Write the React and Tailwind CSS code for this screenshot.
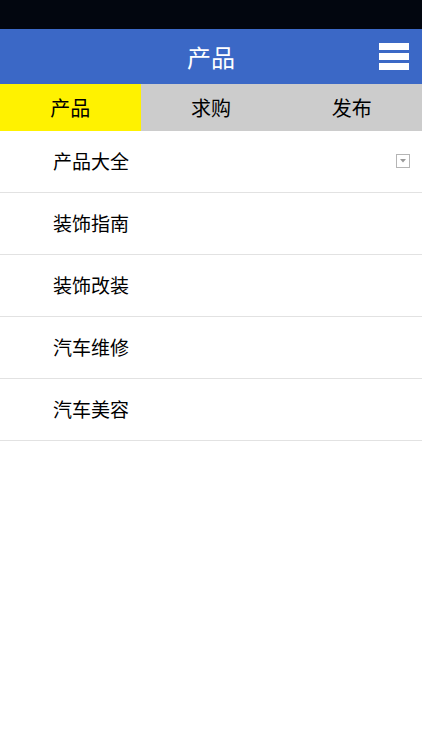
const items = ["产品大全", "装饰指南", "装饰改装", "汽车维修", "汽车美容"];

const font = { fontFamily: '"Noto Sans CJK SC", "Noto Sans", sans-serif' };

export default function App() {
  return (
    <div className="flex h-[750px] w-[422px] flex-col bg-white" style={font}>
      <div className="h-[29px] bg-[#02060f]" />
      <header className="relative flex h-[55px] items-center justify-center bg-[#3b68c6]">
        <h1 className="text-[24px] leading-none text-white">产品</h1>
        <div className="absolute right-[13px] top-[14px] flex w-[30px] flex-col gap-[3px]">
          <span className="h-[7px] bg-white" />
          <span className="h-[7px] bg-white" />
          <span className="h-[7px] bg-white" />
        </div>
      </header>
      <nav className="grid h-[47px] grid-cols-3 bg-[#cccccc] text-[20px] text-black">
        <div className="flex items-center justify-center bg-[#fff200]">产品</div>
        <div className="flex items-center justify-center">求购</div>
        <div className="flex items-center justify-center">发布</div>
      </nav>
      <ul>
        {items.map((t, i) => (
          <li
            key={t}
            className="relative flex h-[62px] items-center border-b border-[#e2e2e2] pl-[53px] text-[19px] text-black"
          >
            {t}
            {i === 0 && (
              <span className="absolute right-[12px] top-[23px] flex h-[14px] w-[14px] items-center justify-center border border-[#b5b5b5]">
                <svg width="6" height="4" viewBox="0 0 6 4">
                  <path d="M0 0H6L3 3.5Z" fill="#9a9a9a" />
                </svg>
              </span>
            )}
          </li>
        ))}
      </ul>
    </div>
  );
}
